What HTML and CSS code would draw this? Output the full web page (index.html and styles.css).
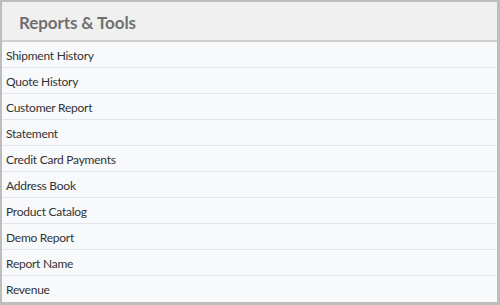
FILE: index.html
```html
<!DOCTYPE html>
<html lang="en">
<head>
    <meta charset="UTF-8">
    <title>Reports &amp; Tools</title>
    <link rel="stylesheet" href="styles.css">
</head>
<body>

<div class="panel">
    <div class="panel-heading">Reports &amp; Tools</div>
    <ul class="report-list">
        <li>Shipment History</li>
        <li>Quote History</li>
        <li>Customer Report</li>
        <li>Statement</li>
        <li>Credit Card Payments</li>
        <li>Address Book</li>
        <li>Product Catalog</li>
        <li>Demo Report</li>
        <li>Report Name</li>
        <li>Revenue</li>
    </ul>
</div>

</body>
</html>
```

FILE: styles.css
```css
/* General Styles */
body {
    margin: 0;
    font-family: Lato, 'Segoe UI', sans-serif;
    color: #333;
    background-color: #fff;
}

.panel {
    width: 500px;
    height: 305px;
    box-sizing: border-box;
    border: 2px solid #bdbdbd;
    border-right-width: 3px;
    border-bottom-width: 3px;
    background-color: #f8f9fb;
    overflow: hidden;
}

.panel-heading {
    height: 38px;
    line-height: 42px;
    padding-left: 17px;
    background-color: #f0f0f0;
    border-bottom: 2px solid #cfcfcf;
    font-size: 17px;
    font-weight: 700;
    letter-spacing: -0.1px;
    color: #707070;
}

/* Report rows */
.report-list {
    list-style: none;
    margin: 0;
    padding: 0;
}

.report-list li {
    height: 25px;
    line-height: 27px;
    padding-left: 4px;
    border-bottom: 1px solid #e3e5e8;
    font-size: 12px;
    letter-spacing: -0.25px;
}

.report-list li:last-child {
    border-bottom: none;
}
```
